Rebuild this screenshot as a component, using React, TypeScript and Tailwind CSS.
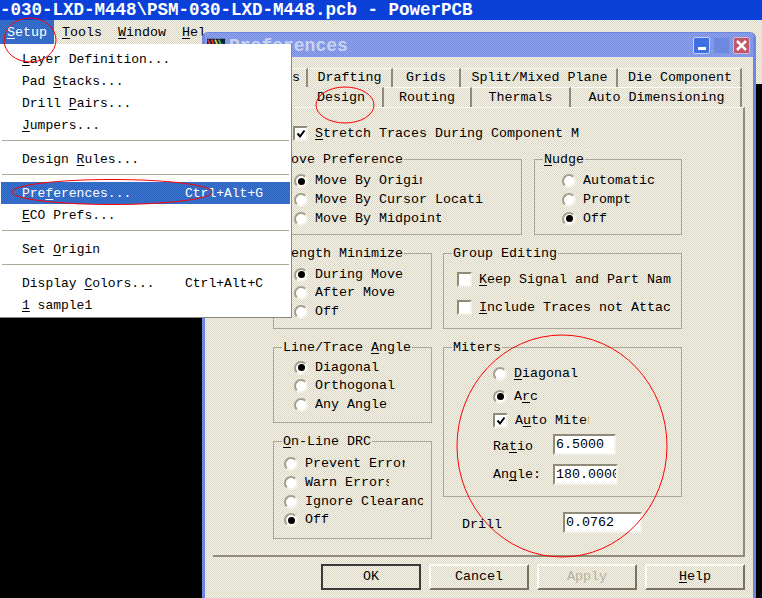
const mono = "font-['Liberation_Mono',monospace]";
const dither =
  "bg-[repeating-conic-gradient(#f8f6ec_0_25%,#d8d5c3_0_50%)] bg-[length:2px_2px]";
const blueDither =
  "bg-[repeating-conic-gradient(#2b62c2_0_25%,#3c76cc_0_50%)] bg-[length:2px_2px]";

function Key({ children }: { children: React.ReactNode }) {
  return <span className="underline underline-offset-2">{children}</span>;
}

function Radio({ label, checked = false, width }: { label: React.ReactNode; checked?: boolean; width: string }) {
  return (
    <div className="flex h-[18.67px] items-center gap-[7px]">
      <span className="flex h-[14px] w-[14px] shrink-0 items-center justify-center rounded-full border-2 border-t-[#a39f8c] border-l-[#a39f8c] border-r-[#f4f2e8] border-b-[#f4f2e8] bg-white">
        {checked && <span className="h-[7px] w-[7px] shrink-0 rounded-full bg-black" />}
      </span>
      <span className={`overflow-hidden whitespace-nowrap ${width}`}>{label}</span>
    </div>
  );
}

function Check({ label, checked = false, width }: { label: React.ReactNode; checked?: boolean; width: string }) {
  return (
    <div className="flex h-[19px] items-center gap-[7px]">
      <span className="flex h-[15px] w-[15px] shrink-0 items-center justify-center border-2 border-t-[#8f8b78] border-l-[#8f8b78] border-r-[#f4f2e8] border-b-[#f4f2e8] bg-white">
        {checked && (
          <svg width="10" height="10" viewBox="0 0 10 10" className="shrink-0">
            <path d="M1.5 4.5 L4 7.5 L8.5 1.5" fill="none" stroke="#000" strokeWidth="2" />
          </svg>
        )}
      </span>
      <span className={`overflow-hidden whitespace-nowrap ${width}`}>{label}</span>
    </div>
  );
}

function Group({
  title,
  className,
  children,
}: {
  title: React.ReactNode;
  className: string;
  children?: React.ReactNode;
}) {
  return (
    <div className={`relative border border-[#a9a797] ${className}`}>
      <span className={`absolute -top-[10px] left-[8px] whitespace-nowrap px-[1px] leading-[20px] ${dither}`}>{title}</span>
      {children}
    </div>
  );
}

function Field({ value, width }: { value: string; width: string }) {
  return (
    <div
      className={`h-[21px] overflow-hidden whitespace-nowrap border-2 border-t-[#8f8b78] border-l-[#8f8b78] border-r-[#f4f2e8] border-b-[#f4f2e8] bg-white pl-[1px] leading-[18px] ${width}`}
    >
      {value}
    </div>
  );
}

function Tab({ label, className }: { label: React.ReactNode; className: string }) {
  return (
    <div
      className={`flex h-full items-center justify-center border-r-2 border-r-[#8f8b78] border-t border-t-[#fbfaf4] whitespace-nowrap ${className}`}
    >
      {label}
    </div>
  );
}

function DlgButton({ label, className }: { label: React.ReactNode; className: string }) {
  return (
    <div
      className={`flex h-[26px] w-[100px] items-center justify-center border-2 ${className}`}
    >
      {label}
    </div>
  );
}

const raised = "border-t-[#fbfaf4] border-l-[#fbfaf4] border-r-[#77735f] border-b-[#77735f]";

function PreferencesDialog() {
  return (
    <div
      className={`absolute left-[202px] top-[32px] h-[580px] w-[554px] overflow-hidden rounded-t-[6px] border-x-[3px] border-t border-[#6d86e0] text-[13.33px] leading-[18px] text-black ${dither}`}
    >
      {/* caption */}
      <div className="flex h-[24px] items-center bg-[repeating-conic-gradient(#93a8ee_0_25%,#7389e0_0_50%)] bg-[length:2px_2px] pl-[2px] pr-[3px]">
        <svg width="18" height="15" viewBox="0 0 20 15" className="mr-[4px] shrink-0">
          <rect width="20" height="15" fill="#123" />
          <path d="M1 1 L7 14 M5 1 L11 14" stroke="#d33" strokeWidth="2" />
          <path d="M9 1 L15 14" stroke="#ec3" strokeWidth="2" />
          <path d="M13 1 L19 14" stroke="#3b6" strokeWidth="2" />
        </svg>
        <span className="translate-y-[1px] text-[18px] font-bold text-[#c9d3f0]">Preferences</span>
        <div className="ml-auto flex gap-[3px]">
          <div className="flex h-[17px] w-[17px] items-end justify-center rounded-[2px] border border-[#c4d0f4] bg-[#3f6fe0] pb-[3px]">
            <span className="h-[3px] w-[8px] bg-white" />
          </div>
          <div className="h-[17px] w-[17px] rounded-[2px] border border-[#7f98e6] bg-[#6d88dc]" />
          <div className="flex h-[17px] w-[17px] items-center justify-center rounded-[2px] border border-[#d8b8c4] bg-[#c0586a]">
            <svg width="13" height="13" viewBox="0 0 13 13">
              <path d="M2 2 L11 11 M11 2 L2 11" stroke="#fff" strokeWidth="2.5" />
            </svg>
          </div>
        </div>
      </div>

      {/* tab rows */}
      <div className="mt-[11px] flex h-[19px] justify-end pr-[11px]">
        <Tab label="Teardrops" className="w-[86px]" />
        <Tab label="Drafting" className="w-[85px]" />
        <Tab label="Grids" className="w-[68px]" />
        <Tab label="Split/Mixed Plane" className="w-[157px] pl-[2px]" />
        <Tab label="Die Component" className="w-[124px] border-r pl-[2px]" />
      </div>
      <div className="flex h-[20px] justify-end pr-[11px]">
        <Tab label="Global" className="w-[70px]" />
        <Tab label="Design" className="w-[100px] border-t-transparent pl-[16px]" />
        <Tab label="Routing" className="w-[88px]" />
        <Tab label="Thermals" className="w-[99px]" />
        <Tab label="Auto Dimensioning" className="w-[171px] border-r pl-[2px]" />
      </div>

      {/* page */}
      <div className="ml-[8px] h-[450px] w-[532px] border-t border-r-2 border-b-2 border-t-[#fbfaf4] border-r-[#8f8b78] border-b-[#8f8b78] pl-[60px] pt-[16px]">
        <div className="pl-[20px]">
          <Check checked label={<><Key>S</Key>tretch Traces During Component M</>} width="w-[264px]" />
        </div>

        <div className="mt-[16px] flex gap-[12px]">
          <Group title={<>Move Preference</>} className="h-[76px] w-[249px] pl-[20px] pt-[12px]">
            <Radio checked label="Move By Origin" width="w-[107px]" />
            <Radio label="Move By Cursor Location" width="w-[168px]" />
            <Radio label="Move By Midpoint" width="w-[126px]" />
          </Group>
          <Group title={<><Key>N</Key>udge</>} className="h-[76px] w-[148px] pl-[27px] pt-[12px]">
            <Radio label="Automatic" width="w-[80px]" />
            <Radio label="Prompt" width="w-[80px]" />
            <Radio checked label="Off" width="w-[80px]" />
          </Group>
        </div>

        <div className="mt-[18px] flex gap-[11px]">
          <Group title={<><Key>L</Key>ength Minimize</>} className="h-[76px] w-[159px] pl-[20px] pt-[11.5px]">
            <Radio checked label="During Move" width="w-[90px]" />
            <Radio label="After Move" width="w-[90px]" />
            <Radio label="Off" width="w-[90px]" />
          </Group>
          <Group title="Group Editing" className="h-[76px] w-[239px] pl-[13px] pt-[16px]">
            <Check label={<><Key>K</Key>eep Signal and Part Names</>} width="w-[192px]" />
            <div className="h-[9px]" />
            <Check label={<><Key>I</Key>nclude Traces not Attached</>} width="w-[192px]" />
          </Group>
        </div>

        <div className="mt-[18px] flex gap-[11px]">
          <div className="flex w-[159px] flex-col gap-[18px]">
            <Group title={<>Line/Trace <Key>A</Key>ngle</>} className="h-[76px] pl-[20px] pt-[10.5px]">
              <Radio checked label="Diagonal" width="w-[90px]" />
              <Radio label="Orthogonal" width="w-[90px]" />
              <Radio label="Any Angle" width="w-[90px]" />
            </Group>
            <Group title={<><Key>O</Key>n-Line DRC</>} className="h-[98px] pl-[10px] pt-[13px]">
              <Radio label="Prevent Errors" width="w-[100px]" />
              <Radio label="Warn Errors" width="w-[84px]" />
              <Radio label="Ignore Clearance" width="w-[118px]" />
              <Radio checked label="Off" width="w-[90px]" />
            </Group>
          </div>

          <div className="flex w-[239px] flex-col">
            <Group title="Miters" className="h-[150px] pl-[49px] pt-[17px]">
              <Radio label={<><Key>D</Key>iagonal</>} width="w-[100px]" />
              <div className="h-[4px]" />
              <Radio checked label={<>A<Key>r</Key>c</>} width="w-[100px]" />
              <div className="h-[5px]" />
              <Check checked label={<>A<Key>u</Key>to Miter</>} width="w-[74px]" />
              <div className="mt-[3.5px] flex items-center">
                <span className="w-[60px] pt-[4px]">Ra<Key>t</Key>io</span>
                <Field value="6.5000" width="w-[63px]" />
              </div>
              <div className="mt-[8px] flex items-center">
                <span className="w-[60px] pt-[2px]">An<Key>g</Key>le:</span>
                <Field value="180.0000" width="w-[65px]" />
              </div>
            </Group>
            <div className="mt-[13px] flex items-center pl-[19px]">
              <span className="w-[101px] pt-[6px]">Drill</span>
              <Field value="0.0762" width="w-[79px]" />
            </div>
          </div>
        </div>
      </div>

      {/* buttons */}
      <div className="mt-[7px] flex justify-end gap-[8px] pr-[8px]">
        <DlgButton label="OK" className="border-[#3a3a3a]" />
        <DlgButton label="Cancel" className={raised} />
        <DlgButton label={<span className="text-[#b3b09f]">Apply</span>} className={raised} />
        <DlgButton label={<><Key>H</Key>elp</>} className={raised} />
      </div>
    </div>
  );
}

function MenuItem({
  label,
  shortcut,
  active = false,
}: {
  label: React.ReactNode;
  shortcut?: string;
  active?: boolean;
}) {
  return (
    <div
      className={`mx-[1px] flex h-[22px] items-center justify-between pl-[21px] pr-[27px] pt-[2px] ${
        active ? `${blueDither} text-white` : "text-black"
      }`}
    >
      <span>{label}</span>
      {shortcut && <span>{shortcut}</span>}
    </div>
  );
}

function Separator() {
  return <div className="mx-[2px] mb-[7px] mt-[4px] h-[1px] bg-[#aca899]" />;
}

function SetupMenu() {
  return (
    <div className="absolute left-0 top-[44px] h-[274px] w-[292px] border-r border-b border-[#8c8a7c] bg-white pt-[4px] text-[13px]">
      <MenuItem label={<><Key>L</Key>ayer Definition...</>} />
      <MenuItem label={<>Pad <Key>S</Key>tacks...</>} />
      <MenuItem label={<>Drill <Key>P</Key>airs...</>} />
      <MenuItem label={<><Key>J</Key>umpers...</>} />
      <Separator />
      <MenuItem label={<>Design <Key>R</Key>ules...</>} />
      <Separator />
      <MenuItem active label={<>Pre<Key>f</Key>erences...</>} shortcut="Ctrl+Alt+G" />
      <MenuItem label={<><Key>E</Key>CO Prefs...</>} />
      <Separator />
      <MenuItem label={<>Set <Key>O</Key>rigin</>} />
      <Separator />
      <MenuItem label={<>Display <Key>C</Key>olors...</>} shortcut="Ctrl+Alt+C" />
      <MenuItem label={<><Key>1</Key> sample1</>} />
    </div>
  );
}

export default function App() {
  return (
    <div className={`relative h-[598px] w-[762px] overflow-hidden bg-black ${mono}`}>
      <div className="flex h-[20px] items-center overflow-hidden whitespace-nowrap bg-[#0a3fd8] text-[17.5px] font-bold leading-[20px] text-white">
        -030-LXD-M448\PSM-030-LXD-M448.pcb - PowerPCB
      </div>
      <div className={`h-[64px] ${dither}`}>
        <div className="flex h-[24px] items-center text-[13.33px] text-black">
          <div className={`flex h-full w-[54px] items-center justify-center pt-[2px] text-white ${blueDither}`}>
            <span><Key>S</Key>etup</span>
          </div>
          <span className="ml-[8px] pt-[2px]"><Key>T</Key>ools</span>
          <span className="ml-[16px] pt-[2px]"><Key>W</Key>indow</span>
          <span className="ml-[16px] w-[24px] overflow-hidden pt-[2px]"><Key>H</Key>elp</span>
        </div>
      </div>

      <PreferencesDialog />
      <SetupMenu />

      {/* the red hand-drawn marks */}
      <svg className="pointer-events-none absolute left-0 top-0" width="762" height="598" fill="none" stroke="#f00" strokeWidth="1">
        <ellipse cx="30" cy="40" rx="26" ry="22" />
        <ellipse cx="112" cy="192" rx="100" ry="12.5" />
        <ellipse cx="345" cy="105" rx="29" ry="18" />
        <ellipse cx="562" cy="446" rx="105" ry="111" />
      </svg>
    </div>
  );
}
